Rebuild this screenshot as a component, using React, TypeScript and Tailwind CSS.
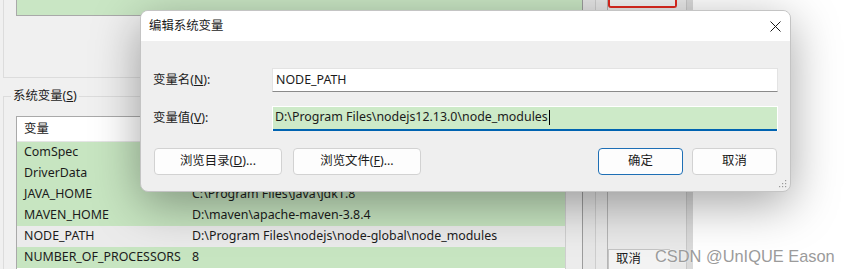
import React from "react";

const rows = [
  { name: "ComSpec", value: "", sel: false },
  { name: "DriverData", value: "", sel: false },
  { name: "JAVA_HOME", value: "C:\\Program Files\\Java\\jdk1.8", sel: false },
  { name: "MAVEN_HOME", value: "D:\\maven\\apache-maven-3.8.4", sel: false },
  { name: "NODE_PATH", value: "D:\\Program Files\\nodejs\\node-global\\node_modules", sel: true },
  { name: "NUMBER_OF_PROCESSORS", value: "8", sel: false },
];

function Grip() {
  return (
    <svg width="8" height="8" viewBox="0 0 8 8" className="text-[#9a9a9a]">
      <rect x="6" y="0" width="1.2" height="1.2" fill="currentColor" />
      <rect x="3" y="3" width="1.2" height="1.2" fill="currentColor" />
      <rect x="6" y="3" width="1.2" height="1.2" fill="currentColor" />
      <rect x="0" y="6" width="1.2" height="1.2" fill="currentColor" />
      <rect x="3" y="6" width="1.2" height="1.2" fill="currentColor" />
      <rect x="6" y="6" width="1.2" height="1.2" fill="currentColor" />
    </svg>
  );
}

export default function App() {
  return (
    <div className="relative w-[849px] h-[269px] overflow-hidden bg-white font-['Noto_Sans','Noto_Sans_CJK_SC',sans-serif] text-[12.4px] text-[#1b1b1b]">
      {/* background window */}
      <div className="flex h-full w-[693px] bg-[#f0f0f0]">
        <div className="flex w-[582px] flex-col">
          {/* user variables group */}
          <div className="ml-[3px] h-[78px] shrink-0 border-b border-l border-[#dcdcdc] pl-[12px]">
            <div className="h-[16px] w-[567px] border-b border-l border-[#a9a9a9] bg-[#c9e6c4]" />
          </div>
          {/* system variables group */}
          <div className="ml-[3px] mt-[18px] flex flex-1 flex-col border-l border-t border-[#dcdcdc]">
            <div className="-mt-[10px] ml-[7px] h-[18px] self-start bg-[#f0f0f0] px-[2px] leading-[18px]">
              系统变量(<span className="underline">S</span>)
            </div>
            <div className="ml-[12px] mt-[11px] flex h-[160px] w-[567px]">
              <div className="flex w-[549px] flex-col border-l border-t border-[#a9a9a9] bg-white">
                <div className="flex h-[25px] shrink-0 items-center border-b border-[#e5e5e5] pl-[7px]">
                  <span className="w-[168px]">变量</span>
                </div>
                {rows.map((r) => (
                  <div
                    key={r.name}
                    className={
                      r.sel
                        ? "flex h-[21px] shrink-0 items-center bg-[#ebebeb] pl-[7px]"
                        : "flex h-[21px] shrink-0 items-center bg-[#c7e5c1] pl-[7px]"
                    }
                  >
                    <span className="w-[168px] whitespace-nowrap">{r.name}</span>
                    <span className="whitespace-nowrap">{r.value}</span>
                  </div>
                ))}
              </div>
              <div className="w-[17px] border-l border-t border-[#cfcfcf] bg-[#ececec]" />
            </div>
          </div>
        </div>
        {/* right strips */}
        <div className="flex flex-1">
          <div className="w-[13px] border-l border-[#9c9c9c] bg-[#e6e6e6]" />
          <div className="w-[12px] border-l border-[#cdcdcd] bg-[#e8e8e8]" />
          <div className="flex w-[79px] flex-col border-l border-[#b5b5b5] bg-[#e9e9e9]">
            <div className="h-[8px] w-[69px] rounded-b-[3px] border-x-2 border-b-2 border-[#e0281f] bg-[#f4f4f4]" />
            <div className="flex-1" />
            <div className="flex h-[20px] w-[62px] items-center border-l border-t border-[#c4c4c4] bg-[#f3f3f3] pl-[7px]">
              取消
            </div>
          </div>
          <div className="w-[7px] border-l border-[#c8c8c8] bg-[#dadada]" />
        </div>
      </div>

      {/* dialog */}
      <div className="absolute left-[140px] top-[10px] flex h-[182px] w-[651px] flex-col overflow-hidden rounded-[8px] border border-[#c4c4c4] bg-[#efefef] shadow-[0_12px_48px_rgba(0,0,0,0.36)]">
        <div className="flex h-[30px] items-center justify-between bg-white pl-[8px] pr-[9px]">
          <span>编辑系统变量</span>
          <svg width="11" height="11" viewBox="0 0 11 11">
            <path d="M0.5 0.5 L10.5 10.5 M10.5 0.5 L0.5 10.5" stroke="#1a1a1a" strokeWidth="1" />
          </svg>
        </div>
        <div className="relative flex flex-1 flex-col px-[12px] pt-[27px]">
          <div className="flex h-[24px] items-center">
            <span className="w-[119px]">
              变量名(<span className="underline">N</span>):
            </span>
            <div className="flex h-[24px] w-[506px] items-center border border-b-[#8a8a8a] border-[#e3e3e3] bg-white pl-[3px]">
              NODE_PATH
            </div>
          </div>
          <div className="mt-[14px] flex h-[24px] items-center">
            <span className="w-[119px]">
              变量值(<span className="underline">V</span>):
            </span>
            <div className="flex h-[25px] w-[506px] flex-col border-x border-t border-white bg-white">
              <div className="flex flex-1 items-center bg-[#cdeac8] pl-[2px] pr-[2px]">
                <span className="whitespace-nowrap">D:\Program Files\nodejs12.13.0\node_modules</span>
                <span className="ml-[1px] h-[15px] w-px bg-black" />
              </div>
              <div className="h-[2px] bg-[#0063b1]" />
            </div>
          </div>
          <div className="mt-[18px] flex h-[27px] items-stretch">
            <button className="ml-[1px] w-[128px] rounded-[4px] border border-[#d2d2d2] bg-[#fdfdfd]">
              浏览目录(<span className="underline">D</span>)...
            </button>
            <button className="ml-[11px] w-[128px] rounded-[4px] border border-[#d2d2d2] bg-[#fdfdfd]">
              浏览文件(<span className="underline">F</span>)...
            </button>
            <div className="flex-1" />
            <button className="w-[85px] rounded-[4px] border border-[#1e6fb5] bg-[#fdfdfd]">确定</button>
            <button className="ml-[9px] mr-[1px] w-[85px] rounded-[4px] border border-[#d2d2d2] bg-[#fdfdfd]">
              取消
            </button>
          </div>
          <div className="absolute bottom-[3px] right-[3px]">
            <Grip />
          </div>
        </div>
      </div>

      {/* watermark */}
      <div className="absolute left-[655px] top-[245px] font-['Liberation_Sans',sans-serif] text-[16.4px] leading-[22px] text-[#9b9b9b] [text-shadow:0_0_2px_rgba(255,255,255,0.9)]">
        CSDN @UnIQUE Eason
      </div>
    </div>
  );
}
